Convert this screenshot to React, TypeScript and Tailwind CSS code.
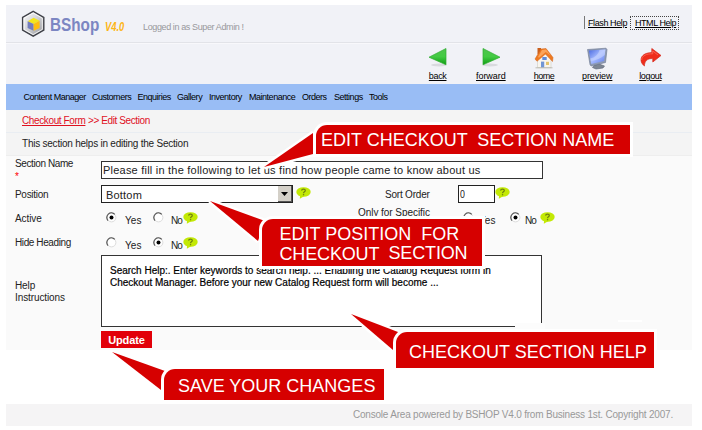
import React from "react";

const navItems = [
  { label: "Content Manager", box: "w-[68.5px]" },
  { label: "Customers", box: "w-[45.5px]" },
  { label: "Enquiries", box: "w-[39.5px]" },
  { label: "Gallery", box: "w-[32px]" },
  { label: "Inventory", box: "w-[40px]" },
  { label: "Maintenance", box: "w-[53px]" },
  { label: "Orders", box: "w-[32px]" },
  { label: "Settings", box: "w-[35px]" },
  { label: "Tools", box: "w-[30px]" },
];

function Logo() {
  return (
    <svg width="24" height="28" viewBox="0 0 24 28" className="shrink-0">
      <defs>
        <linearGradient id="hex" x1="0" y1="0" x2="1" y2="1">
          <stop offset="0" stopColor="#ffffff" />
          <stop offset="0.5" stopColor="#cfd0d4" />
          <stop offset="1" stopColor="#8f9094" />
        </linearGradient>
      </defs>
      <path d="M12.2 1.4 22.8 7.4V20.2L12.2 26.2 1.6 20.2V7.4Z" fill="url(#hex)" stroke="#3f4148" strokeWidth="1.4" />
      <path d="M12.2 3 21.3 8.2V19.4L12.2 24.6 3.1 19.4V8.2Z" fill="none" stroke="#fff" strokeWidth="0.8" />
      <path d="M6.6 11.2 12.6 7.8 18.6 10.8 12.6 14Z" fill="#f2e61d" />
      <path d="M6.6 11.2 12.6 14V20.8L6.6 18Z" fill="#737dbc" />
      <path d="M18.6 10.8 12.6 14V20.8L18.6 18Z" fill="#fdbd10" />
    </svg>
  );
}

function BackIcon() {
  return (
    <svg width="22" height="22" viewBox="0 0 22 22">
      <defs>
        <linearGradient id="green" x1="0" y1="0" x2="0" y2="1">
          <stop offset="0" stopColor="#4fc44c" />
          <stop offset="0.5" stopColor="#43cb43" />
          <stop offset="1" stopColor="#109c14" />
        </linearGradient>
      </defs>
      <ellipse cx="12" cy="18" rx="8" ry="1.4" fill="#d9dadf" />
      <path d="M19 1.5V17.8L2 10.2Z" fill="url(#green)" stroke="#2fae31" strokeWidth="0.7" />
    </svg>
  );
}

function ForwardIcon() {
  return (
    <svg width="22" height="22" viewBox="0 0 22 22">
      <ellipse cx="10" cy="18" rx="8" ry="1.4" fill="#d9dadf" />
      <path d="M3 1.5V17.8L20 10.2Z" fill="url(#green)" stroke="#2fae31" strokeWidth="0.7" />
    </svg>
  );
}

function HomeIcon() {
  return (
    <svg width="22" height="22" viewBox="0 0 22 22">
      <path d="M4.5 11 11 6l7 6v8.6H4.5Z" fill="#f8f5ee" stroke="#c9c4b8" strokeWidth="0.5" />
      <path d="M4.5 1H8V7H4.5Z" fill="#c95f1c" />
      <path d="M8 2 13 1.5 20 10.5 19.5 14.5 12.5 7 4 14.3 2 12Z" fill="#ee7a22" stroke="#d0621a" strokeWidth="0.5" />
      <path d="M9 3 13 2.6 17.5 8.5 12.8 5 6 10.8 5 10Z" fill="#fba45a" />
      <rect x="9.3" y="10" width="4.4" height="3" fill="#5f8ad8" />
      <rect x="8" y="14.6" width="3.2" height="6" fill="#7196d5" />
      <rect x="13" y="14.8" width="3" height="3.2" fill="#e4c46d" />
      <path d="M2.5 20.8H19.5" stroke="#b9b7ac" strokeWidth="0.9" />
    </svg>
  );
}

function PreviewIcon() {
  return (
    <svg width="22" height="24" viewBox="0 0 22 24">
      <defs>
        <linearGradient id="screen" x1="0" y1="0" x2="1" y2="1">
          <stop offset="0" stopColor="#4a69e0" />
          <stop offset="0.5" stopColor="#a7bbff" />
          <stop offset="1" stopColor="#5b79ea" />
        </linearGradient>
      </defs>
      <path d="M8 18.5 13 17 18.5 19 17 21 10 22 6.5 20.5Z" fill="#7d8694" stroke="#596273" strokeWidth="0.6" />
      <path d="M1.5 2.5 20 1.2 21 2.5 19.5 15.5 5 19 4 17.6Z" fill="#8e9bb4" stroke="#697690" strokeWidth="0.6" />
      <path d="M2.8 3.6 19.4 2.4 18 14 5.3 17Z" fill="url(#screen)" />
      <path d="M4.2 11.5C9 10.5 12.5 7 13.5 2.9L19.4 2.4 18.7 8C15 11 10 13.5 4.8 14Z" fill="#c9d5ff" opacity="0.6" />
    </svg>
  );
}

function LogoutIcon() {
  return (
    <svg width="24" height="22" viewBox="0 0 24 22">
      <path d="M13.8 1.5 23 8.5 14.8 15V11.6C9.5 11.2 6.5 14 6.4 19 0.5 14.5 2 5.8 13.8 5.6Z" fill="#ef2d1b" stroke="#d42718" strokeWidth="0.7" />
      <path d="M3.6 13C4.2 8.7 8 6.7 14.7 6.8V4L20 8" fill="none" stroke="#ff6a58" strokeWidth="0.8" />
    </svg>
  );
}

const tools = [
  { label: "back", icon: <BackIcon />, tip: "tracking-[-0.35px]" },
  { label: "forward", icon: <ForwardIcon />, tip: "tracking-[-0.05px]" },
  { label: "home", icon: <HomeIcon />, tip: "tracking-[-0.5px]" },
  { label: "preview", icon: <PreviewIcon />, tip: "tracking-[-0.1px]" },
  { label: "logout", icon: <LogoutIcon />, tip: "tracking-[-0.35px]" },
];

function Tip() {
  return (
    <svg width="15" height="12" viewBox="0 0 15 12" className="shrink-0">
      <ellipse cx="7.5" cy="5" rx="7.2" ry="4.8" fill="#c3e905" />
      <path d="M4 8.5 3.8 11.8 8.5 9Z" fill="#c3e905" />
      <path d="M5.6 3.6C5.7 1.6 9.4 1.6 9.3 3.6 9.2 4.8 7.5 4.8 7.5 6.3" fill="none" stroke="#6f8210" strokeWidth="1.2" />
      <rect x="6.9" y="7.1" width="1.3" height="1.2" fill="#6f8210" />
    </svg>
  );
}

function Radio({ checked = false }: { checked?: boolean }) {
  return (
    <svg width="11" height="11" viewBox="0 0 11 11" className="shrink-0">
      <circle cx="5.5" cy="5.5" r="4.4" fill="#fff" stroke="#dcdcdc" strokeWidth="1" />
      <path d="M2 8.6A4.4 4.4 0 0 1 8.8 2.4" fill="none" stroke="#555" strokeWidth="1.2" />
      {checked && <circle cx="5.5" cy="5.5" r="2" fill="#000" />}
    </svg>
  );
}

function YesNo({ value }: { value: "yes" | "no" }) {
  return (
    <div className="flex h-[14px] items-start">
      <Radio checked={value === "yes"} />
      <span className="ml-[8px] mt-[4px] w-[28px] tracking-[0.1px]">Yes</span>
      <Radio checked={value === "no"} />
      <span className="ml-[7px] mt-[4px] w-[12px] tracking-[-1px]">No</span>
      <Tip />
    </div>
  );
}

type CalloutProps = { box: string; points: string; children: React.ReactNode };

function Callout({ box, points, children }: CalloutProps) {
  return (
    <>
      <svg width="702" height="430" viewBox="0 0 702 430" className="absolute left-0 top-0">
        <polygon points={points} fill="#d60000" stroke="#fff" strokeWidth="5" paintOrder="stroke" strokeLinejoin="bevel" />
      </svg>
      <div className={"absolute whitespace-pre rounded-tl-[11px] bg-[#d60000] text-[18px] text-white shadow-[0_0_0_3px_#fff] " + box}>
        {children}
      </div>
    </>
  );
}

export default function App() {
  return (
    <div className="relative h-[430px] w-[702px] overflow-hidden whitespace-pre bg-white pl-[6px] pt-[5px] font-['Liberation_Sans',Arial,sans-serif] text-[10px] leading-none text-[#222]">
      <div className="w-[686px]">
        <header className="flex h-[38px] items-start border-b border-[#e2e3e8] bg-[#f1f2f7] pl-[15px] pt-[5px]">
          <Logo />
          <span className="ml-[5px] mt-[6px] w-[55px] origin-left scale-x-[0.85] text-[18px] font-bold text-[#7c86c2]">BShop</span>
          <span className="mt-[11px] w-[38px] origin-left scale-x-[0.78] text-[12px] font-bold italic text-[#fdb515]">V4.0</span>
          <span className="mt-[13px] w-[441px] text-[9px] tracking-[-0.38px] text-[#98989c]">Logged in as Super Admin !</span>
          <div className="mt-[6px] flex h-[13px] border-l border-[#777] pl-[3px] pt-[3px] text-[9px] text-black">
            <span className="w-[42px] tracking-[-0.4px] underline">Flash Help</span>
          </div>
          <span className="mt-[6px] h-[14px] w-[49px] border border-dotted border-[#444] pl-[4px] pt-[2px] text-[9px] tracking-[-0.45px] text-black underline">HTML Help</span>
        </header>

        <div className="flex h-[41px] justify-end border-t border-[#f8f8fb] bg-[#f1f2f7] pr-[15px] pt-[3px]">
          {tools.map((t) => (
            <div key={t.label} className="flex w-[53.2px] flex-col items-center text-[9px] text-black">
              <div className="flex h-[25px] items-start">{t.icon}</div>
              <span className={"underline " + t.tip}>{t.label}</span>
            </div>
          ))}
        </div>

        <nav className="flex h-[26px] items-center bg-[#99bdf5] pl-[17.5px] text-[9px] tracking-[-0.48px] text-black">
          {navItems.map((n) => (
            <span key={n.label} className={n.box}>{n.label}</span>
          ))}
        </nav>

        <div className="flex h-[23px] items-center border-b border-[#e9edf2] bg-[#f4f4f4] pl-[16px] text-[#e0101f]">
          <span className="w-[66px] tracking-[-0.38px] underline">Checkout Form</span>
          <span className="tracking-[-0.4px]">&gt;&gt; Edit Section</span>
        </div>
        <div className="flex h-[23px] items-center border-b border-[#eeeeee] bg-[#f4f4f4] pl-[16px] tracking-[-0.23px]">
          This section helps in editing the Section
        </div>

        <main className="h-[194px] bg-[#fafafa] pl-[9px] pt-[3px] tracking-[-0.4px]">
          <div className="flex h-[26px]">
            <div className="w-[86px]">
              Section Name
              <div className="mt-[3px] text-[#f00]">*</div>
            </div>
            <div className="mt-[2px] h-[18px] w-[442px] border border-[#333] bg-white pl-[1px] pt-[3px] text-[11px] tracking-[0.22px]">
              Please fill in the following to let us find how people came to know about us
            </div>
          </div>

          <div className="flex h-[23px] items-start">
            <span className="mt-[5px] w-[86px] tracking-[-0.3px]">Position</span>
            <div className="flex h-[18px] w-[192px] justify-between border border-[#222] bg-white pl-[4px]">
              <span className="mt-[4px] text-[11px] tracking-[0.2px]">Bottom</span>
              <span className="flex w-[14px] items-center justify-center border-b border-r border-[#555] bg-[#d4d0c8]">
                <svg width="7" height="4" viewBox="0 0 7 4"><path d="M0 0H7L3.5 4Z" fill="#000" /></svg>
              </span>
            </div>
            <div className="ml-[3px] mt-[2px] w-[89px]"><Tip /></div>
            <span className="mt-[5px] w-[73px] tracking-[-0.2px]">Sort Order</span>
            <span className="h-[18px] w-[37px] border border-[#222] bg-white pl-[1px] pt-[3px] text-[11px]"><span className="inline-block origin-left scale-x-[0.8]">0</span></span>
            <div className="mt-[2px]"><Tip /></div>
          </div>

          <div className="flex h-[24px] items-start">
            <span className="mt-[6px] w-[91px] tracking-[-0.1px]">Active</span>
            <div className="mt-[4px] w-[252px]"><YesNo value="yes" /></div>
            <span className="w-[105px] tracking-[-0.05px]">Only for Specific</span>
            <div className="mt-[4px] flex items-start">
              <Radio />
              <span className="ml-[5px] mt-[4px] w-[31px] tracking-[0.1px]">Yes</span>
              <Radio checked />
              <span className="ml-[4px] mt-[4px] w-[15px] tracking-[-1px]">No</span>
              <Tip />
            </div>
          </div>

          <div className="flex h-[23px] items-start">
            <span className="mt-[6px] w-[91px]">Hide Heading</span>
            <div className="mt-[5px]"><YesNo value="no" /></div>
          </div>

          <div className="flex h-[76px]">
            <div className="w-[86px] pt-[25px] leading-[12px] tracking-[-0.1px]">{"Help\nInstructions"}</div>
            <div className="h-[72px] w-[441px] border border-[#333] bg-white pl-[8px] pt-[9px] leading-[12px] tracking-[0px] text-black [-webkit-text-stroke:0.2px_#000]">
              {"Search Help:. Enter keywords to search help. ... Enabling the Catalog Request form in\nCheckout Manager. Before your new Catalog Request form will become ..."}
            </div>
          </div>

          <button className="ml-[86px] flex h-[17px] w-[51px] items-center justify-center bg-[#e20009] pt-[2px] text-[11px] font-bold tracking-[-0.1px] text-white">Update</button>
        </main>

        <footer className="mt-[54px] flex h-[22px] items-center justify-end bg-[#f5f4f5] pr-[19px] text-[10px] tracking-[-0.2px] text-[#999]">
          Console Area powered by BSHOP V4.0 from Business 1st. Copyright 2007.
        </footer>
      </div>

      <div className="absolute left-[515px] top-[323px] h-[9px] w-[30px] bg-[#fcfcfc]" />
      <div className="absolute left-[618px] top-[320px] h-[2px] w-[24px] bg-white" />

      <Callout box="left-[316px] top-[125px] h-[29px] w-[314px] pl-[5px] pt-[6px] leading-[19px]" points="264,167 313,133 313,154">
        EDIT CHECKOUT  SECTION NAME
      </Callout>
      <Callout box="left-[262px] top-[219px] h-[47px] w-[220px] pl-[17.5px] pt-[5px] leading-[20px]" points="210,201 265,221 258,241">
        <div>EDIT POSITION  FOR</div>
        <div className="flex tracking-[-0.15px]">
          <span className="w-[109px]">CHECKOUT</span>
          <span className="-mt-px">SECTION</span>
        </div>
      </Callout>
      <Callout box="left-[396px] top-[332px] h-[36px] w-[258px] pl-[13px] pt-[11px] leading-[19px]" points="351,314 398,332 393,350">
        CHECKOUT SECTION HELP
      </Callout>
      <Callout box="left-[164px] top-[369px] h-[31px] w-[220px] pl-[14px] pt-[8px] leading-[19px]" points="112,352 165,371 161,390">
        SAVE YOUR CHANGES
      </Callout>
    </div>
  );
}
